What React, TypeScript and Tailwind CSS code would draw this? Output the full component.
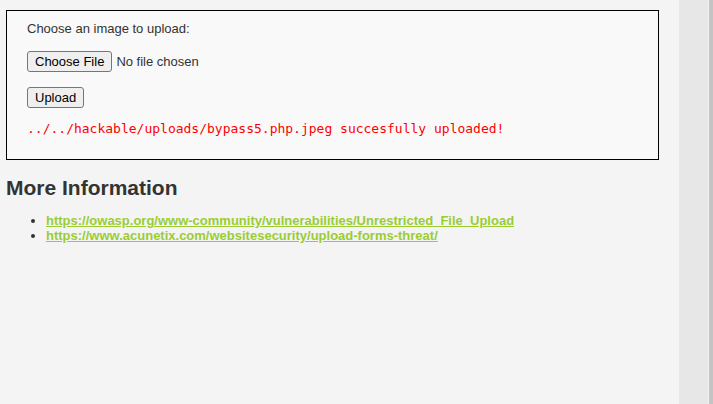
import React from "react";

export default function App() {
  const btn =
    "h-[21px] border border-[#767676] rounded-[3px] bg-[#efefef] px-[7px] text-[13px] leading-[15px] text-black";
  return (
    <div
      className="flex h-[404px] w-[713px] overflow-hidden"
      style={{ fontFamily: '"Liberation Sans", Arial, sans-serif' }}
    >
      <div className="w-[679px] bg-[#f4f4f4] pl-[6px] pt-[10px]">
        <div className="w-[653px] h-[150px] border border-black bg-[#f8f9f8] pl-[20px]">
          <p className="mt-[10px] text-[13px] leading-[15px] text-[#333]">
            Choose an image to upload:
          </p>
          <div className="mt-[15px] flex items-center">
            <span className={btn + " flex items-center"}>Choose File</span>
            <span className="ml-[4px] text-[13px] leading-[15px] text-[#333]">
              No file chosen
            </span>
          </div>
          <div className="mt-[15px] flex">
            <span className={btn + " flex items-center px-[6px]"}>Upload</span>
          </div>
          <pre
            className="mt-[13px] text-[13px] leading-[15px] text-[#ff0000]"
            style={{ fontFamily: '"DejaVu Sans Mono", monospace' }}
          >
            ../../hackable/uploads/bypass5.php.jpeg succesfully uploaded!
          </pre>
        </div>
        <h2 className="mt-[16px] text-[21px] leading-[24px] font-bold text-[#333]">
          More Information
        </h2>
        <ul className="mt-[13px] list-disc pl-[40px] text-[13px] leading-[15px] text-[#333]">
          <li>
            <a className="font-bold text-[#9acd32] underline" href="#">
              https://owasp.org/www-community/vulnerabilities/Unrestricted_File_Upload
            </a>
          </li>
          <li>
            <a className="font-bold text-[#9acd32] underline" href="#">
              https://www.acunetix.com/websitesecurity/upload-forms-threat/
            </a>
          </li>
        </ul>
      </div>
      <div className="flex-1 bg-[#e7e7e7]" />
      <div className="w-px bg-[#f0f0f0]" />
      <div className="w-[4px] bg-[#c4c4c4]" />
    </div>
  );
}
